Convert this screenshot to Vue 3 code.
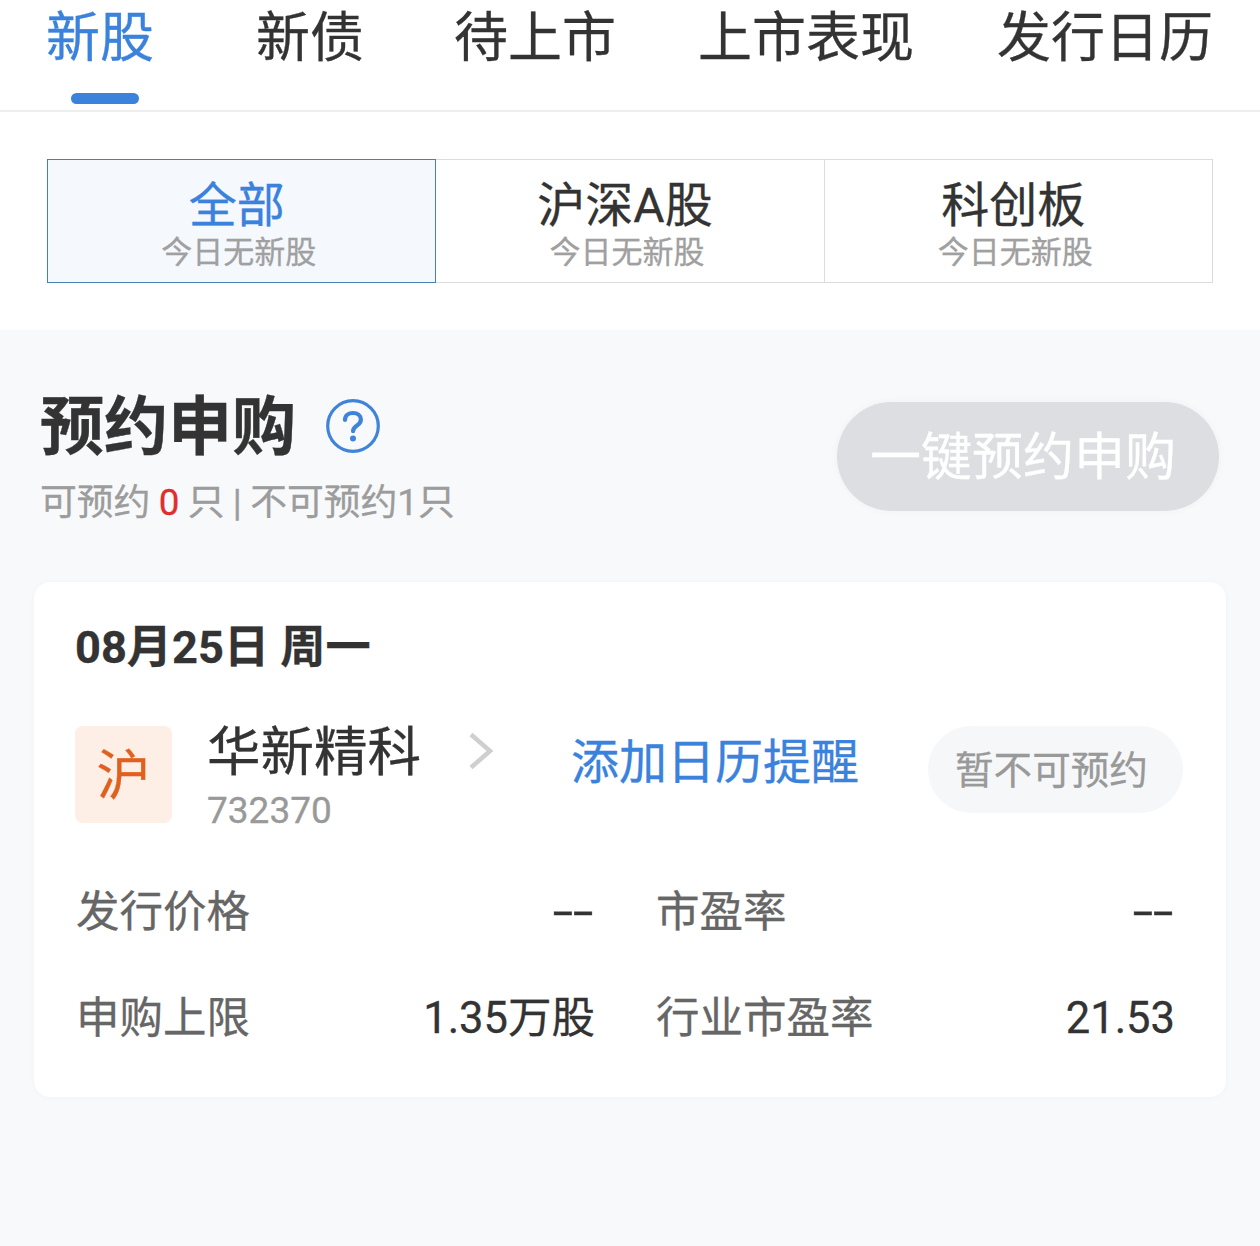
<template>
  <div class="page">
    <div class="tabs">
      <div
        v-for="tab in tabs"
        :key="tab.name"
        class="tab"
        :class="{ active: tab.active }"
        :style="{ marginLeft: tab.offset + 'px' }"
      >
        {{ tab.name }}
        <span v-if="tab.active" class="tab-bar"></span>
      </div>
    </div>

    <div class="markets">
      <div v-for="(m, i) in markets" :key="m" class="market" :class="{ active: i === 0 }">
        <div class="market-name">{{ m }}</div>
        <div class="market-sub">今日无新股</div>
      </div>
    </div>

    <div class="content">
      <div class="head">
        <div class="head-left">
          <div class="head-title">
            <h2>预约申购</h2>
            <svg class="help" width="54" height="54" viewBox="0 0 54 54" fill="none">
              <circle cx="27" cy="27" r="25.3" stroke="#3f84d8" stroke-width="3.2" />
              <path d="M19 21c0-4.5 3.4-7 8-7s7.9 2.7 7.9 6.6c0 3-1.7 4.5-3.9 6-2.4 1.6-3.9 2.9-3.9 5.6"
                stroke="#3f84d8" stroke-width="4.2" stroke-linecap="round" />
              <circle cx="27" cy="39.6" r="3" fill="#3f84d8" />
            </svg>
          </div>
          <div class="head-sub">可预约 <em>0</em> 只 | 不可预约1只</div>
        </div>
        <div class="one-key">一键预约申购</div>
      </div>

      <div class="card">
        <div class="date">08月25日 周一</div>
        <div class="stock">
          <div class="badge">沪</div>
          <div class="stock-info">
            <div class="stock-name">华新精科</div>
            <div class="stock-code">732370</div>
          </div>
          <svg class="arrow" width="26" height="38" viewBox="0 0 26 38" fill="none">
            <path d="M3 2.5 22 19 3 35.5" stroke="#cfcfcf" stroke-width="4.5" />
          </svg>
          <div class="remind">添加日历提醒</div>
          <div class="pill">暂不可预约</div>
        </div>
        <div class="stats">
          <div v-for="s in stats" :key="s.label" class="stat">
            <span class="stat-label">{{ s.label }}</span>
            <span class="stat-value" :class="{ dash: s.value === '--' }">{{ s.value }}</span>
          </div>
        </div>
      </div>
    </div>
  </div>
</template>

<script setup>
const tabs = [
  { name: '新股', active: true, offset: 46 },
  { name: '新债', offset: 102 },
  { name: '待上市', offset: 90 },
  { name: '上市表现', offset: 82 },
  { name: '发行日历', offset: 83 },
]

const markets = ['全部', '沪深A股', '科创板']

const stats = [
  { label: '发行价格', value: '--' },
  { label: '市盈率', value: '--' },
  { label: '申购上限', value: '1.35万股' },
  { label: '行业市盈率', value: '21.53' },
]
</script>

<style>
html, body { background: #f7f9fb; }
</style>

<style scoped>
.page {
  width: 1260px;
  height: 1246px;
  overflow: hidden;
  font-family: Roboto, "Noto Sans CJK SC", sans-serif;
  background: #f7f9fb;
  color: #333;
  -webkit-text-stroke: 0.3px;
}
.tabs {
  display: flex;
  height: 110px;
  background: #fff;
  border-bottom: 2px solid #eeeeee;
}
.tab {
  position: relative;
  flex: none;
  height: 76px;
  font-size: 54px;
  line-height: 78px;
  white-space: nowrap;
  color: #333;
}
.tab.active { color: #3a82dc; }
.tab-bar {
  position: absolute;
  left: 25px;
  top: 93px;
  width: 68px;
  height: 11px;
  border-radius: 6px;
  background: #3a82dc;
}
.markets {
  display: flex;
  padding: 47px;
  background: #fff;
}
.market {
  flex: 1;
  height: 124px;
  box-sizing: border-box;
  border: 1px solid #dcdcdc;
  border-left: none;
  background: #fff;
  text-align: center;
}
.market.active {
  border: 1px solid #4482b5;
  background: #f5f9fe;
}
.market-name {
  margin-top: 18px;
  padding-right: 10px;
  font-size: 48px;
  line-height: 56px;
  color: #333;
}
.market.active .market-name { color: #3a82dc; }
.market-sub {
  margin-top: -2px;
  padding-right: 6px;
  font-size: 31px;
  line-height: 42px;
  color: #a0a0a0;
}
.content { padding: 58px 34px 0; }
.head {
  display: flex;
  justify-content: space-between;
  align-items: flex-start;
  padding: 0 7px 0 6px;
}
.head-title {
  display: flex;
  align-items: center;
  height: 76px;
  gap: 30px;
}
h2 {
  margin: 4px 0 0;
  font-size: 64px;
  line-height: 76px;
  font-weight: 700;
  color: #333;
}
.help { flex: none; }
.head-sub {
  margin-top: 12px;
  font-size: 36.8px;
  line-height: 54px;
  word-spacing: -0.8px;
  color: #9c9c9c;
}
.head-sub em {
  font-style: normal;
  color: #e02e2e;
}
.one-key {
  width: 382px;
  height: 109px;
  margin-top: 14px;
  padding-right: 10px;
  box-sizing: border-box;
  border-radius: 55px;
  background: #dddee2;
  box-shadow: 0 0 8px rgba(0, 0, 0, 0.04);
  color: #fff;
  font-size: 51px;
  line-height: 111px;
  text-align: center;
}
.card {
  height: 515px;
  margin-top: 52px;
  padding: 0 42px;
  box-sizing: border-box;
  border-radius: 16px;
  background: #fff;
  box-shadow: 0 0 6px rgba(0, 0, 0, 0.03);
}
.date {
  margin-left: -1px;
  padding-top: 34px;
  font-size: 45.2px;
  line-height: 64px;
  font-weight: 700;
  color: #333;
}
.stock {
  display: flex;
  align-items: flex-start;
  margin-top: 46px;
  margin-left: -1px;
}
.badge {
  flex: none;
  width: 97px;
  height: 97px;
  border-radius: 8px;
  background: #fdeee6;
  color: #e0611f;
  font-size: 54px;
  line-height: 101px;
  text-align: center;
}
.stock-info {
  flex: none;
  width: 212px;
  margin-left: 35px;
  margin-top: -6px;
}
.stock-name {
  font-size: 53.5px;
  line-height: 66px;
  white-space: nowrap;
  color: #333;
}
.stock-code {
  font-size: 37px;
  line-height: 50px;
  color: #999;
}
.arrow {
  flex: none;
  margin: 6px 0 0 49px;
}
.remind {
  flex: none;
  margin-left: 77px;
  width: 286px;
  font-size: 48px;
  line-height: 74px;
  color: #3a82dc;
  white-space: nowrap;
}
.pill {
  flex: none;
  width: 255px;
  height: 87px;
  margin-left: 71px;
  padding-right: 8px;
  box-sizing: border-box;
  border-radius: 44px;
  background: #f6f7f9;
  color: #999;
  font-size: 38.6px;
  line-height: 89px;
  text-align: center;
}
.stats {
  display: grid;
  grid-template-columns: 518px 518px;
  column-gap: 62px;
  row-gap: 41px;
  margin-top: 44px;
}
.stat {
  display: flex;
  justify-content: space-between;
  height: 65px;
  font-size: 43.5px;
  line-height: 65px;
}
.stat-label { color: #666; }
.stat-value {
  margin-right: -1px;
  color: #333;
}
.dash {
  display: inline-block;
  margin-right: 1px;
  font-size: 44px;
  transform: scaleX(1.67);
  transform-origin: right center;
}
</style>
